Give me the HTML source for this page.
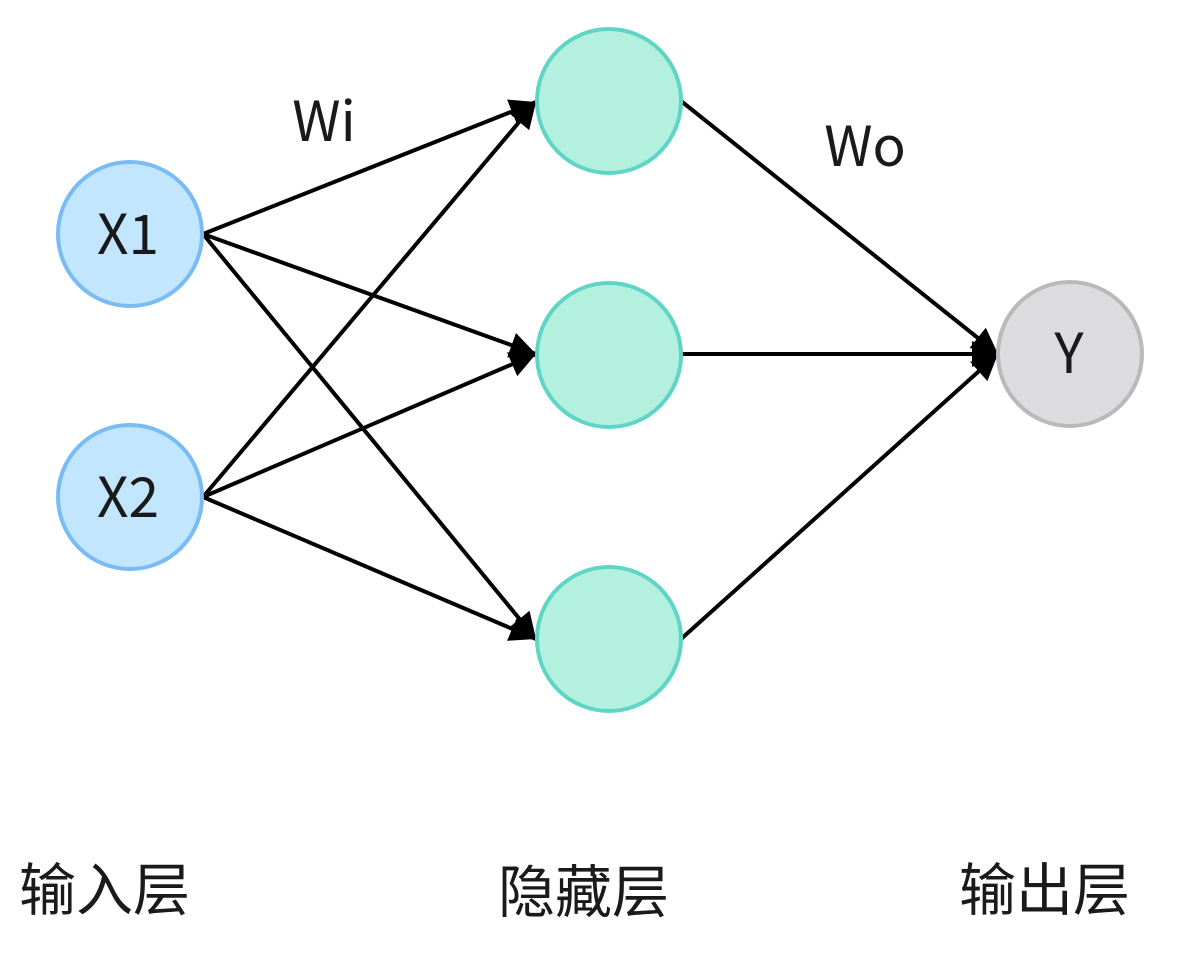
<!DOCTYPE html>
<html><head><meta charset="utf-8"><style>
html,body{margin:0;padding:0;background:#fff;}
svg{display:block}
</style></head><body>
<svg width="1200" height="953" viewBox="0 0 1200 953" xmlns="http://www.w3.org/2000/svg">
<defs>
<marker id="a" viewBox="0 0 10 10" refX="10" refY="5" markerWidth="6.5" markerHeight="6.5" markerUnits="strokeWidth" orient="auto">
<path d="M0,0 L10,5 L0,10 z" fill="#000"/>
</marker>
</defs>
<g stroke="#000" stroke-width="4" fill="none" marker-end="url(#a)">
<line x1="203" y1="234" x2="536" y2="102"/>
<line x1="203" y1="234" x2="536" y2="354"/>
<line x1="203" y1="234" x2="536" y2="639"/>
<line x1="203" y1="497" x2="536" y2="102"/>
<line x1="203" y1="497" x2="536" y2="354"/>
<line x1="203" y1="497" x2="536" y2="639"/>
<line x1="681" y1="101" x2="998" y2="354"/>
<line x1="681" y1="354" x2="998" y2="354"/>
<line x1="681" y1="639" x2="998" y2="354"/>
</g>
<g stroke-width="4">
<circle cx="130" cy="234" r="72" fill="#c2e6fd" stroke="#79bcf5"/>
<circle cx="130" cy="497" r="72" fill="#c2e6fd" stroke="#79bcf5"/>
<circle cx="609" cy="101" r="72" fill="#b3f0de" stroke="#5fd5c5"/>
<circle cx="609" cy="355" r="72" fill="#b3f0de" stroke="#5fd5c5"/>
<circle cx="609" cy="639" r="72" fill="#b3f0de" stroke="#5fd5c5"/>
<circle cx="1070" cy="354" r="72" fill="#dcdcde" stroke="#b9b9bb"/>
</g>
<g font-family="'Noto Sans CJK SC', Liberation Sans, sans-serif" font-size="55" fill="#1a1a1a" text-anchor="middle">
<text x="128" y="254">X1</text>
<text x="128" y="517">X2</text>
<text x="1069" y="373">Y</text>
<text x="324" y="141">Wi</text>
<text x="865" y="166">Wo</text>
</g>
<g font-family="'Noto Sans CJK SC', sans-serif" font-size="57" fill="#1a1a1a">
<text x="19" y="910">输入层</text>
<text x="498" y="912">隐藏层</text>
<text x="959" y="910">输出层</text>
</g>
</svg>
</body></html>
